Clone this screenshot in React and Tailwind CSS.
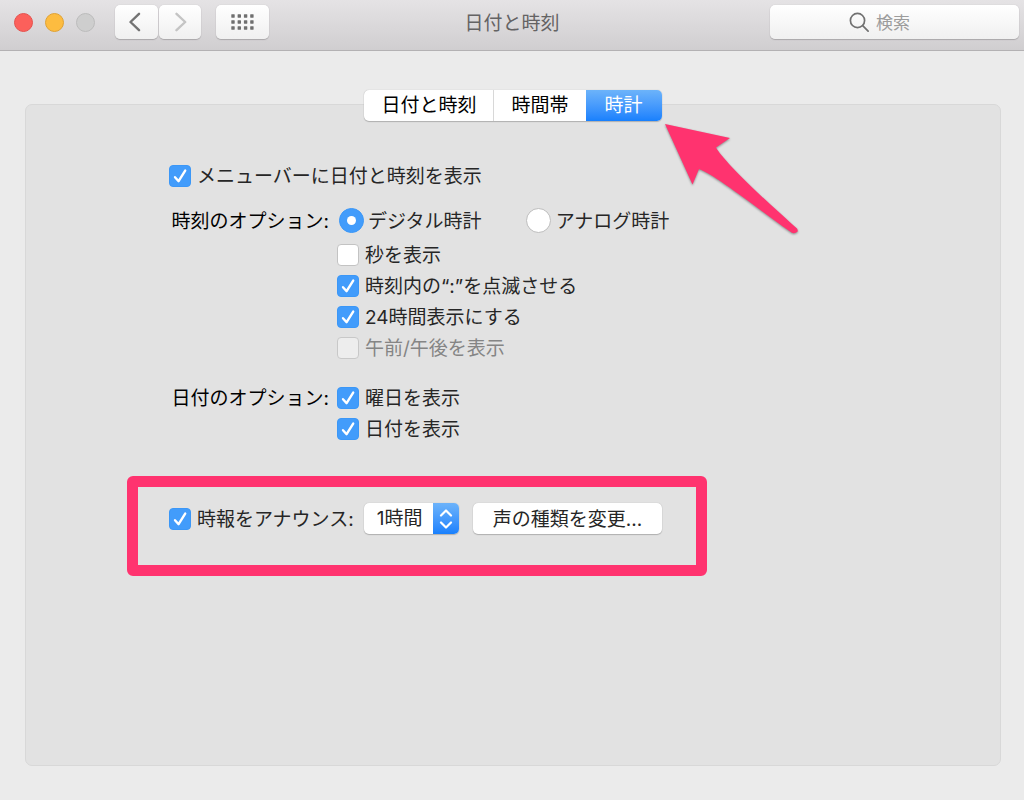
import React from "react";

const toolbarButton =
  "flex h-[34px] items-center justify-center bg-linear-to-b from-white to-[#f0f0f0] shadow-[0_1px_1px_#a9a7a9,0_0_1px_#b8b6b8]";

function Tick({ label, checked = false, disabled = false }) {
  return (
    <label
      className={
        disabled
          ? "flex h-[31px] items-center gap-[6px] text-[#858585]"
          : "flex h-[31px] items-center gap-[6px] text-[#262626]"
      }
    >
      <span className="grid size-[22px] shrink-0">
        <input
          type="checkbox"
          defaultChecked={checked}
          disabled={disabled}
          className="peer col-start-1 row-start-1 size-[22px] appearance-none rounded-[4px] border border-[#c3c3c3] bg-white checked:border-[#3b97f7] checked:bg-[#429cfb] disabled:border-[#c8c8c8] disabled:bg-[#ededed]"
        />
        <svg
          viewBox="0 0 22 22"
          className="pointer-events-none invisible col-start-1 row-start-1 size-[22px] peer-checked:visible"
          fill="none"
          stroke="#fff"
          strokeWidth="2.4"
          strokeLinecap="round"
          strokeLinejoin="round"
          aria-hidden="true"
        >
          <path d="M6 12.2 9.6 16.2 16.2 5.6" />
        </svg>
      </span>
      <span className="pt-[2px] whitespace-nowrap">{label}</span>
    </label>
  );
}

function ClockRadio({ label, checked = false }) {
  return (
    <label className="flex items-center gap-[4px] text-[#262626]">
      <span className="grid size-[26px] shrink-0 place-items-center">
        <input
          type="radio"
          name="clock-style"
          defaultChecked={checked}
          className="peer col-start-1 row-start-1 size-[25px] appearance-none rounded-full border border-[#bdbdbd] bg-white checked:border-[#3b97f7] checked:bg-[#429cfb]"
        />
        <span className="pointer-events-none invisible col-start-1 row-start-1 size-[9px] rounded-full bg-white peer-checked:visible" />
      </span>
      <span className="pt-[2px] whitespace-nowrap">{label}</span>
    </label>
  );
}

function Toolbar() {
  return (
    <header className="grid h-[51px] grid-cols-[1fr_auto_1fr] items-center border-b border-[#b3b1b3] bg-linear-to-b from-[#e5e3e5] to-[#d0ced0] px-[5px] pb-[6px]">
      <div className="flex items-center pl-[9px]">
        <div className="mr-[20px] flex gap-[12px]">
          <button aria-label="閉じる" className="size-[19px] rounded-full border border-[#e5524e] bg-[#fc605b]" />
          <button aria-label="しまう" className="size-[19px] rounded-full border border-[#e0a233] bg-[#fdbc40]" />
          <button aria-label="拡大" disabled className="size-[19px] rounded-full border border-[#bcbcbc] bg-[#cecece]" />
        </div>
        <div className="mr-[15px] flex gap-px">
          <button aria-label="戻る" className={toolbarButton + " w-[43px] rounded-[5px]"}>
            <svg viewBox="0 0 12 20" className="mr-[4px] h-[20px] w-[12px]" fill="none" stroke="#737373" strokeWidth="2.4" strokeLinecap="round" strokeLinejoin="round">
              <path d="M10 1.800 1.500 10l8.500 8.200" />
            </svg>
          </button>
          <button aria-label="進む" className={toolbarButton + " w-[42px] rounded-[5px]"}>
            <svg viewBox="0 0 12 20" className="ml-[2px] h-[20px] w-[12px]" fill="none" stroke="#c4c4c4" strokeWidth="2.4" strokeLinecap="round" strokeLinejoin="round">
              <path d="M1.500 1.800 10.200 10l-8.700 8.200" />
            </svg>
          </button>
        </div>
        <button aria-label="すべてを表示" className={toolbarButton + " w-[53px] rounded-[5px]"}>
          <svg viewBox="0 0 23 16" className="h-[16px] w-[23px]" fill="#6f6f6f">
            {[0, 6, 12].map((y) =>
              [0, 6.3, 12.6, 18.9].map((x) => <rect key={x + "-" + y} x={x + 0.3} y={y + 0.3} width="3.4" height="3.4" rx="0.4" />)
            )}
          </svg>
        </button>
      </div>
      <h1 className="pt-[4px] text-[19px] leading-[28px] text-[#646364]">日付と時刻</h1>
      <label className="flex h-[34px] w-[249px] items-center gap-[7px] justify-self-end rounded-[5px] bg-linear-to-b from-white to-[#f0f0f0] pl-[79px] shadow-[0_1px_1px_#a9a7a9,0_0_1px_#b8b6b8]">
        <svg viewBox="0 0 20 20" className="size-[20px] shrink-0" fill="none" stroke="#717171" strokeWidth="1.7" strokeLinecap="round" aria-hidden="true">
          <circle cx="8.500" cy="8.500" r="7.100" />
          <path d="m13.700 13.700 5.400 5.400" />
        </svg>
        <input
          type="search"
          aria-label="検索"
          placeholder="検索"
          className="w-full min-w-0 appearance-none bg-transparent pt-[2px] text-[17px] leading-[26px] outline-none placeholder:text-[#9c9c9c]"
        />
      </label>
    </header>
  );
}

function Tabs() {
  return (
    <div className="relative z-10 self-center">
      <div role="tablist" className="flex h-[31px] overflow-hidden rounded-[5px] bg-white text-[19px] leading-[28px] text-black shadow-[0_1px_1px_#b0b0b0,0_0_1px_#a8a8a8]">
        <button role="tab" aria-selected="false" className="border-r border-[#d8d8d8] px-[17px]">日付と時刻</button>
        <button role="tab" aria-selected="false" className="px-[17px]">時間帯</button>
        <button role="tab" aria-selected="true" className="bg-linear-to-b from-[#6cb3fa] to-[#1780fd] px-[19px] text-white">時計</button>
      </div>
      <svg
        viewBox="0 0 136 114"
        className="pointer-events-none absolute top-full left-full mt-[2px] ml-px h-[114px] w-[136px] overflow-visible drop-shadow-[0_1px_1px_rgba(0,0,0,0.4)]"
        fill="#ff336f"
        aria-hidden="true"
      >
        <path d="M2 1 67 15 53 24.500C59 35 84 61 134 105.500Q135.500 108 134 109Q131.500 111 128.500 109.500C82 76 50 51 36 46L29.500 61.500Z" />
      </svg>
    </div>
  );
}

export default function App() {
  return (
    <div className="flex min-h-screen flex-col bg-[#ebebeb] font-['Inter','Noto_Sans_CJK_JP',sans-serif]">
      <Toolbar />
      <main className="flex flex-1 flex-col pt-[39px] pr-[23px] pb-[34px] pl-[25px]">
        <Tabs />
        <section className="-mt-[17px] flex-1 rounded-[7px] border border-[#d8d8d8] bg-[#e2e2e2] pt-[55px] pb-[40px] pl-[101px] text-[19px] leading-[28px]">
          <div className="pl-[42px]">
            <Tick label="メニューバーに日付と時刻を表示" checked />
            <div className="mt-[11px] grid grid-cols-[160px_1fr] gap-x-[8px] gap-y-[19px]">
              <div id="time-options" className="flex h-[37px] items-center justify-end pt-[2px] whitespace-nowrap text-black">
                時刻のオプション:
              </div>
              <div role="group" aria-labelledby="time-options">
                <div className="flex h-[37px] items-center gap-[44px] pl-px">
                  <ClockRadio label="デジタル時計" checked />
                  <ClockRadio label="アナログ時計" />
                </div>
                <Tick label="秒を表示" />
                <Tick label="時刻内の“:”を点滅させる" checked />
                <Tick label="24時間表示にする" checked />
                <Tick label="午前/午後を表示" disabled />
              </div>
              <div id="date-options" className="flex h-[31px] items-center justify-end pt-[2px] whitespace-nowrap text-black">
                日付のオプション:
              </div>
              <div role="group" aria-labelledby="date-options">
                <Tick label="曜日を表示" checked />
                <Tick label="日付を表示" checked />
              </div>
            </div>
          </div>
          <div className="mt-[32px] flex w-fit items-center rounded-[6px] border-[11px] border-[#ff336f] pt-[16px] pr-[34px] pb-[31px] pl-[31px]">
            <Tick label="時報をアナウンス:" checked />
            <div className="ml-[10px] grid h-[31px] w-[95px] overflow-hidden rounded-[5px] bg-white shadow-[0_1px_1px_#b0b0b0,0_0_1px_#a8a8a8]">
              <select
                aria-label="時報の間隔"
                className="col-start-1 row-start-1 w-full appearance-none bg-transparent pl-[13px] text-[19px] leading-[28px] text-[#262626]"
              >
                <option>1時間</option>
                <option>30分</option>
                <option>15分</option>
              </select>
              <span className="pointer-events-none col-start-1 row-start-1 flex w-[26px] items-center justify-center justify-self-end bg-linear-to-b from-[#6cb3fa] to-[#1780fd]">
                <svg viewBox="0 0 14 20" className="h-[20px] w-[14px]" fill="none" stroke="#fff" strokeWidth="2.2" strokeLinecap="round" strokeLinejoin="round" aria-hidden="true">
                  <path d="M2 6.500 7 1.500l5 5M2 13.500l5 5 5-5" />
                </svg>
              </span>
            </div>
            <button className="ml-[14px] h-[31px] rounded-[5px] bg-white px-[20px] pt-[2px] text-[#262626] shadow-[0_1px_1px_#b0b0b0,0_0_1px_#a8a8a8]">
              声の種類を変更...
            </button>
          </div>
        </section>
      </main>
    </div>
  );
}
